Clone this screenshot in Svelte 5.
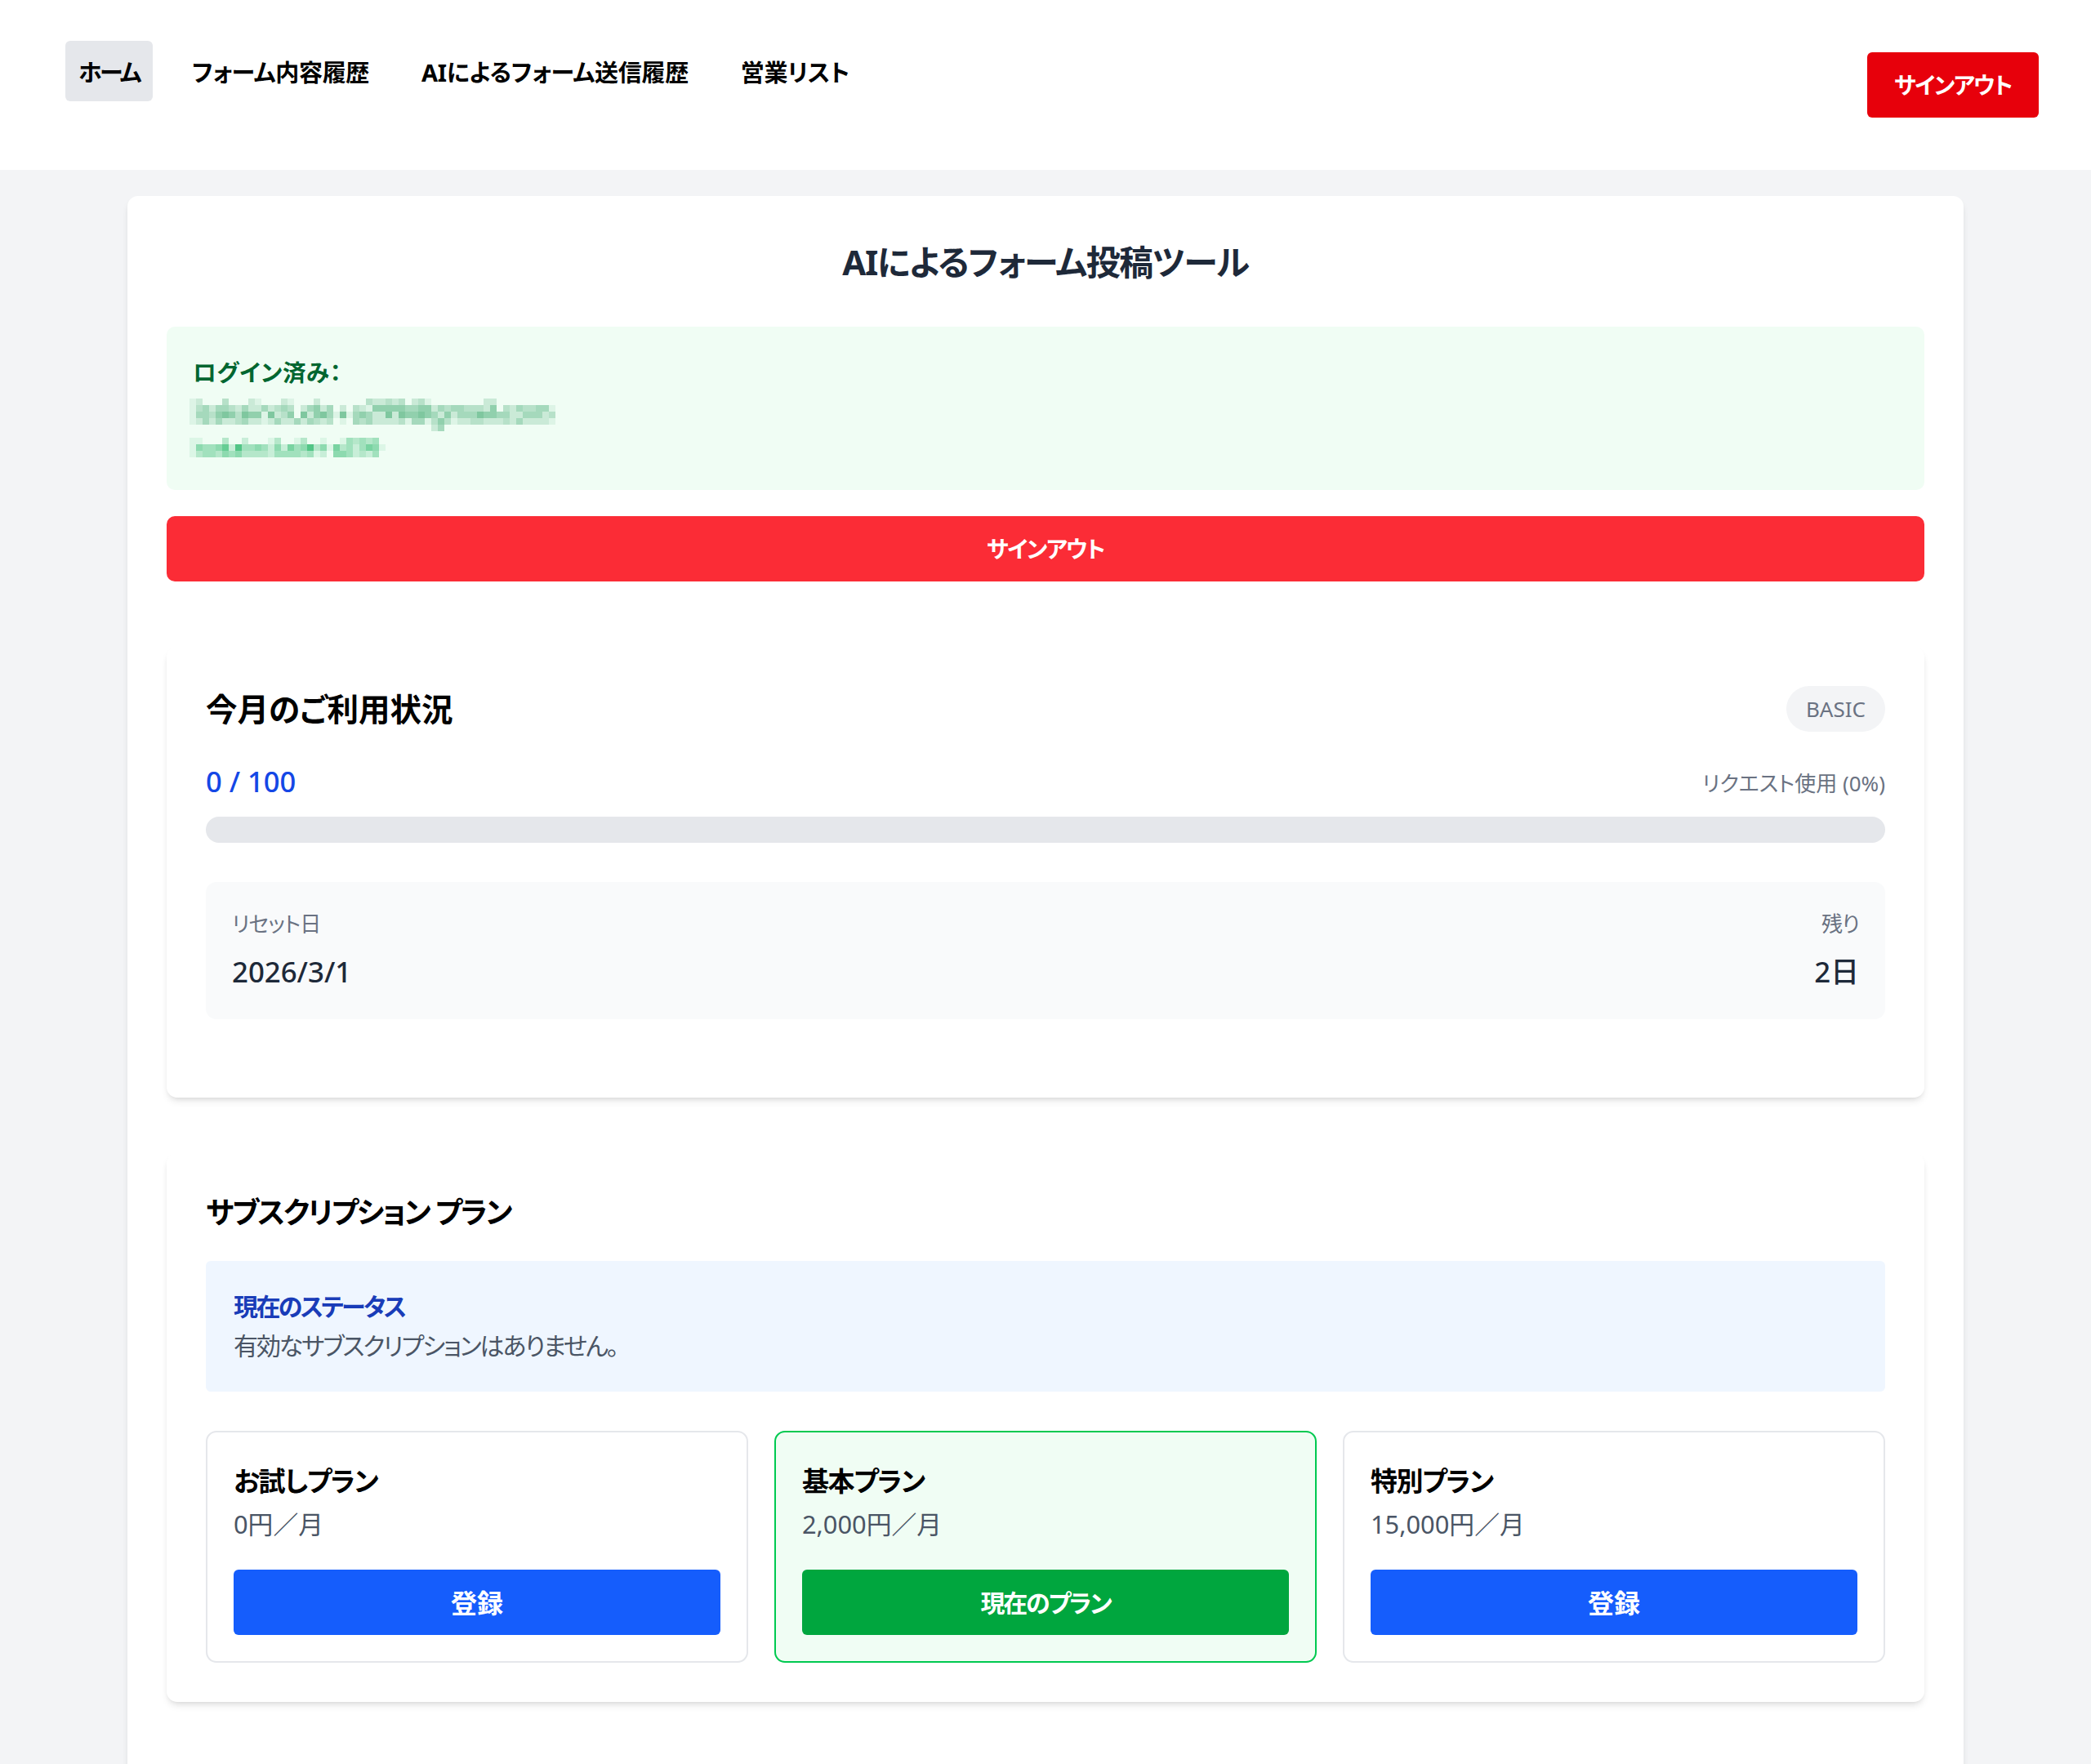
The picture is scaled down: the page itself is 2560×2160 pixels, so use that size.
<script lang="ts">
  const navItems = ["ホーム", "フォーム内容履歴", "AIによるフォーム送信履歴", "営業リスト"];

  const plans = [
    { name: "お試しプラン", price: "0円／月", current: false },
    { name: "基本プラン", price: "2,000円／月", current: true },
    { name: "特別プラン", price: "15,000円／月", current: false },
  ];

  // the redacted account lines are a pixel mosaic in the original, one digit per 8px cell
  const CELL = 8;
  const mailGreen = "70,172,117";
  const nameGreen = "62,190,120";
  const mosaic = [
    { y: 0, color: mailGreen, cells: "12000300021000" + "21000200000003" + "22323023100000" + "00022000000000" },
    { y: 8, color: mailGreen, cells: "13424432422423" + "43024524020321" + "55555445524344" + "33325032433441" },
    { y: 16, color: mailGreen, cells: "14435653655162" + "35062564161454" + "22626556542524" + "44655442244423" },
    { y: 24, color: mailGreen, cells: "12424223422124" + "22424323010434" + "22223144135312" + "23322232422221" },
    { y: 32, color: mailGreen, cells: "0".repeat(37) + "24" },
    { y: 48, color: nameGreen, cells: "1100030020" + "0013001300" + "1001434340" },
    { y: 56, color: nameGreen, cells: "1544572844" + "5425264583" + "5163424651" },
    { y: 64, color: nameGreen, cells: "1344354533" + "3324444341" + "205542324" },
  ];
</script>

<div class="page">
  <header class="topbar">
    <nav class="nav">
      {#each navItems as item, i}
        <span class="nav-item" class:active={i === 0}>{item}</span>
      {/each}
    </nav>
    <button class="signout-top">サインアウト</button>
  </header>

  <main class="main-card">
    <h1 class="title">AIによるフォーム投稿ツール</h1>

    <section class="login-box">
      <p class="login-label">ログイン済み：</p>
      <svg class="mosaic" width="456" height="72" aria-hidden="true">
        {#each mosaic as row}
          {#each row.cells.split("") as cell, x}
            {#if cell !== "0"}
              <rect x={x * CELL} y={row.y} width={CELL} height={CELL} fill="rgb({row.color})" fill-opacity={Number(cell) / 9} />
            {/if}
          {/each}
        {/each}
      </svg>
    </section>

    <button class="signout-wide">サインアウト</button>

    <section class="panel usage">
      <div class="usage-head">
        <h2>今月のご利用状況</h2>
        <span class="badge">BASIC</span>
      </div>
      <div class="usage-count">
        <span class="count">0 / 100</span>
        <span class="count-note">リクエスト使用 (0%)</span>
      </div>
      <div class="progress"></div>
      <div class="reset-box">
        <div>
          <p class="reset-label">リセット日</p>
          <p class="reset-value">2026/3/1</p>
        </div>
        <div class="reset-right">
          <p class="reset-label">残り</p>
          <p class="reset-value">2日</p>
        </div>
      </div>
    </section>

    <section class="panel subscription">
      <h2>サブスクリプション プラン</h2>
      <div class="status-box">
        <p class="status-title">現在のステータス</p>
        <p class="status-text">有効なサブスクリプションはありません。</p>
      </div>
      <div class="plans">
        {#each plans as plan}
          <article class="plan" class:current={plan.current}>
            <h3>{plan.name}</h3>
            <p class="price">{plan.price}</p>
            <button class="plan-btn" class:current={plan.current}>{plan.current ? "現在のプラン" : "登録"}</button>
          </article>
        {/each}
      </div>
    </section>
  </main>
</div>

<style>
  :global(body) {
    margin: 0;
    background: #f3f4f6;
  }

  .page {
    height: 2160px;
    overflow: hidden;
    color: #000;
    font-family: "Noto Sans", "Noto Sans CJK JP", sans-serif;
    font-feature-settings: "palt";
  }

  p,
  h1,
  h2,
  h3 {
    margin: 0;
  }

  button {
    padding: 0 0 3px;
    border: none;
    color: #fff;
    font: inherit;
    font-feature-settings: inherit;
    font-weight: 700;
  }

  .topbar {
    display: flex;
    justify-content: space-between;
    align-items: center;
    box-sizing: border-box;
    height: 208px;
    padding: 0 64px 0 80px;
    background: #fff;
  }

  .nav {
    align-self: flex-start;
    display: flex;
    gap: 32px;
    margin-top: 50px;
  }

  .nav-item {
    display: flex;
    align-items: center;
    height: 74px;
    padding: 0 16px;
    border-radius: 6px;
    font-size: 29px;
    font-weight: 700;
    letter-spacing: -0.3px;
  }

  .nav-item.active {
    background: #e5e7eb;
    letter-spacing: -2.6px;
  }

  .signout-top {
    width: 210px;
    height: 80px;
    border-radius: 6px;
    background: #e7000b;
    font-size: 28px;
    letter-spacing: -1.6px;
  }

  .main-card {
    box-sizing: border-box;
    width: 2248px;
    margin: 32px auto 0;
    padding: 48px 48px 120px;
    border-radius: 13px;
    background: #fff;
    box-shadow: 0 6px 10px -2px rgba(0, 0, 0, 0.1), 0 3px 6px -3px rgba(0, 0, 0, 0.1);
  }

  .title {
    height: 64px;
    margin-bottom: 48px;
    color: #1e2939;
    font-size: 42px;
    font-weight: 700;
    letter-spacing: -1.4px;
    line-height: 66px;
    text-align: center;
  }

  .login-box {
    box-sizing: border-box;
    height: 200px;
    padding: 32px 32px 0;
    border-radius: 10px;
    background: #f0fdf4;
  }

  .login-label {
    height: 56px;
    color: #016630;
    font-size: 28.5px;
    font-weight: 700;
    letter-spacing: 0.6px;
    line-height: 48px;
  }

  .mosaic {
    display: block;
    margin-left: -4px;
  }

  .signout-wide {
    display: block;
    width: 100%;
    height: 80px;
    margin-top: 32px;
    border-radius: 10px;
    background: #fb2c36;
    font-size: 28px;
    letter-spacing: -1.6px;
  }

  .panel {
    box-sizing: border-box;
    padding: 0 48px;
    border-radius: 13px;
    background: #fff;
    box-shadow: 0 6px 10px -2px rgba(0, 0, 0, 0.1), 0 3px 6px -3px rgba(0, 0, 0, 0.1);
  }

  .panel h2 {
    font-weight: 700;
  }

  .usage {
    height: 552px;
    margin-top: 80px;
    padding-top: 48px;
  }

  .usage-head {
    display: flex;
    justify-content: space-between;
    align-items: center;
    height: 56px;
  }

  .usage-head h2 {
    margin-top: -5px;
    font-size: 38.5px;
  }

  .badge {
    display: flex;
    align-items: center;
    height: 56px;
    padding: 0 24px;
    border-radius: 28px;
    background: #f3f4f6;
    color: #6a7282;
    font-size: 26px;
  }

  .usage-count {
    display: flex;
    justify-content: space-between;
    align-items: center;
    height: 60px;
    margin-top: 30px;
  }

  .count {
    color: #1447e6;
    font-size: 34.5px;
    font-weight: 500;
  }

  .count-note {
    margin-top: 3px;
    color: #6a7282;
    font-size: 26px;
  }

  .progress {
    height: 32px;
    margin-top: 14px;
    border-radius: 16px;
    background: #e5e7eb;
  }

  .reset-box {
    display: flex;
    justify-content: space-between;
    box-sizing: border-box;
    height: 168px;
    margin-top: 48px;
    padding: 30px 32px 0;
    border-radius: 13px;
    background: #f9fafb;
  }

  .reset-right {
    text-align: right;
  }

  .reset-label {
    color: #6a7282;
    font-size: 26px;
    letter-spacing: -0.8px;
    line-height: 42px;
  }

  .reset-value {
    margin-top: 15px;
    color: #1e2939;
    font-size: 34.8px;
    font-weight: 500;
    line-height: 46px;
  }

  .subscription {
    height: 672px;
    margin-top: 68px;
    padding-top: 48px;
  }

  .subscription h2 {
    font-size: 36px;
    letter-spacing: -2.2px;
    line-height: 50px;
  }

  .status-box {
    box-sizing: border-box;
    height: 160px;
    margin-top: 34px;
    padding: 32px 34px 0;
    border-radius: 6px;
    background: #eff6ff;
  }

  .status-title {
    color: #193cb8;
    font-size: 30px;
    font-weight: 700;
    letter-spacing: -2.6px;
    line-height: 48px;
  }

  .status-text {
    color: #4a5565;
    font-size: 30px;
    letter-spacing: -2.1px;
    line-height: 48px;
  }

  .plans {
    display: grid;
    grid-template-columns: repeat(3, 1fr);
    gap: 32px;
    margin-top: 48px;
  }

  .plan {
    box-sizing: border-box;
    height: 284px;
    padding: 32px;
    border: 2px solid #e5e7eb;
    border-radius: 13px;
  }

  .plan.current {
    border-color: #00c950;
    background: #f0fdf4;
  }

  .plan h3 {
    font-size: 33px;
    font-weight: 700;
    letter-spacing: -1.4px;
    line-height: 56px;
  }

  .price {
    margin-top: 0;
    color: #4a5565;
    font-size: 30.8px;
    line-height: 48px;
  }

  .plan-btn {
    display: block;
    width: 100%;
    height: 80px;
    margin-top: 32px;
    border-radius: 6px;
    background: #155dfc;
    font-size: 32px;
  }

  .plan-btn.current {
    background: #00a63e;
    font-size: 30px;
    letter-spacing: -2.2px;
  }
</style>
